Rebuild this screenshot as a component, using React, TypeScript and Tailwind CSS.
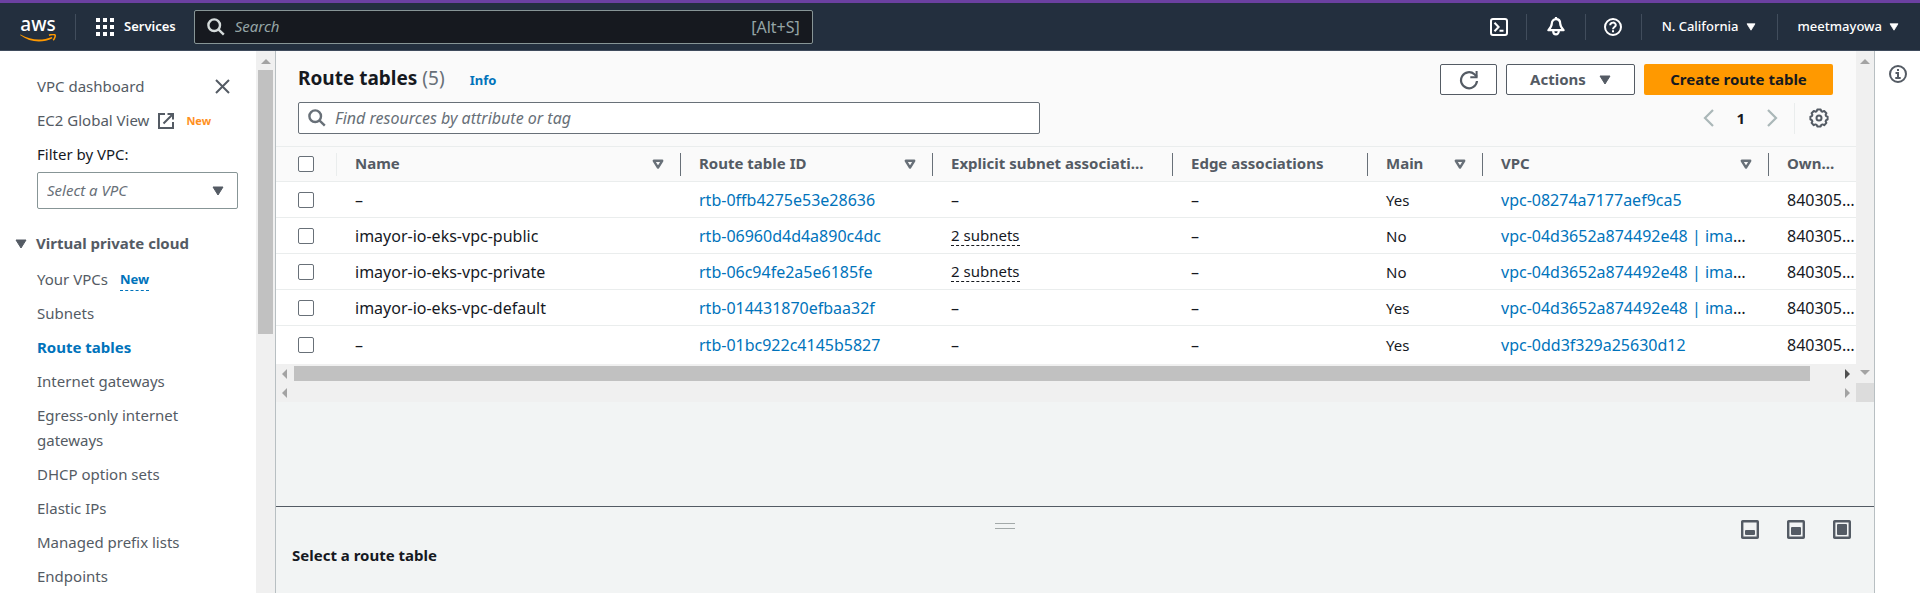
import React from "react";

type Dir = "up" | "down" | "left" | "right";

const arrowPoints: Record<Dir, string> = {
  up: "0,7 5,2 10,7",
  down: "0,3 10,3 5,8",
  left: "7,0 2,5 7,10",
  right: "3,0 8,5 3,10",
};

function ScrollArrow({ dir, color = "#a3a3a3" }: { dir: Dir; color?: string }) {
  return (
    <svg width="10" height="10" viewBox="0 0 10 10" aria-hidden="true" className="shrink-0">
      <polygon points={arrowPoints[dir]} fill={color} />
    </svg>
  );
}

function Caret({ className = "" }: { className?: string }) {
  return (
    <svg width="12" height="10" viewBox="0 0 12 10" aria-hidden="true" className={className}>
      <path d="M1 1h10L6 9z" fill="currentColor" stroke="currentColor" strokeLinejoin="round" />
    </svg>
  );
}

function SearchIcon({ className = "" }: { className?: string }) {
  return (
    <svg width="18" height="18" viewBox="0 0 18 18" fill="none" stroke="currentColor" strokeWidth="2.4" aria-hidden="true" className={className}>
      <circle cx="7.2" cy="7.2" r="5.8" />
      <path d="M11.4 11.4L16.8 16.6" />
    </svg>
  );
}

function FilterIcon() {
  return (
    <svg width="12" height="11" viewBox="0 0 12 11" fill="none" aria-hidden="true">
      <path d="M1.8 1.8h8.400L6 8.600z" stroke="#687078" strokeWidth="2.400" strokeLinejoin="round" />
    </svg>
  );
}

function AwsLogo() {
  return (
    <a href="#home" aria-label="AWS home" className="flex w-[36px] flex-col items-center pt-1 text-white">
      <span className="text-[19px] leading-[20px] font-medium">aws</span>
      <svg width="36" height="9" viewBox="0 0 36 9" fill="none" aria-hidden="true">
        <path d="M0 1C10 8.600 22.500 9.300 32.500 4.200l-.6-1.300C22 6.800 11 6.400 0.500 0.500z" fill="#ff9900" />
        <path d="M29 1.200c2.200-.9 5.400-1 6-.3.700.9-.3 3.700-1.800 5.300" stroke="#ff9900" strokeWidth="1.500" />
      </svg>
    </a>
  );
}

function TopNav() {
  return (
    <header className="flex h-12 shrink-0 items-center border-b border-[#3f4b5c] bg-[#232f3e] pr-[21px] pl-5 text-white">
      <AwsLogo />
      <div className="ml-[19px] h-[26px] w-px bg-[#414d5c]" />
      <button className="ml-5 flex items-center gap-[10px] text-[13px] font-semibold">
        <svg width="18" height="18" viewBox="0 0 18 18" fill="currentColor" aria-hidden="true">
          <path d="M0 0h4v4H0zM7 0h4v4H7zM14 0h4v4h-4zM0 7h4v4H0zM7 7h4v4H7zM14 7h4v4h-4zM0 14h4v4H0zM7 14h4v4H7zM14 14h4v4h-4z" />
        </svg>
        Services
      </button>
      <label className="ml-[18px] flex h-[34px] w-[619px] items-center rounded-[2px] border border-[#879596] bg-[#16191f] px-3 text-[#95a5a6]">
        <SearchIcon className="text-[#d5dbdb]" />
        <input
          aria-label="Search"
          placeholder="Search"
          className="ml-[10px] min-w-0 flex-1 bg-transparent text-[15px] italic outline-none placeholder:text-[#95a5a6]"
        />
        <span className="text-[16px]">[Alt+S]</span>
      </label>
      <div className="ml-auto flex items-center text-[13px] font-medium">
        <button aria-label="CloudShell">
          <svg width="18" height="18" viewBox="0 0 18 18" fill="none" stroke="currentColor" strokeWidth="2" aria-hidden="true">
            <rect x="1" y="1" width="16" height="16" rx="2" />
            <path d="M4.500 4.800L8.600 9l-4.100 4.200M9.500 12.700h4" />
          </svg>
        </button>
        <div className="mr-5 ml-[18px] h-[26px] w-px bg-[#414d5c]" />
        <button aria-label="Notifications">
          <svg width="18" height="19" viewBox="0 0 18 19" fill="none" stroke="currentColor" strokeWidth="2.200" strokeLinejoin="round" aria-hidden="true">
            <path d="M9 2.200c-2.600 0-4.200 1.900-4.200 4.300 0 2.600-.9 4-3.400 6.700h15.200c-2.500-2.700-3.400-4.100-3.400-6.700 0-2.400-1.600-4.300-4.200-4.300z" />
            <path d="M9 0v2M6.200 14c0 4.600 5.600 4.600 5.600 0" />
          </svg>
        </button>
        <div className="mr-[18px] ml-5 h-[26px] w-px bg-[#414d5c]" />
        <button aria-label="Help">
          <svg width="18" height="18" viewBox="0 0 18 18" fill="none" stroke="currentColor" strokeWidth="2" aria-hidden="true">
            <circle cx="9" cy="9" r="8" />
            <path d="M6.200 7.200C6.200 3.800 11.800 3.800 11.800 7c0 2-2.800 2-2.800 4.200M9 12.300v2" />
          </svg>
        </button>
        <div className="mr-5 ml-[19px] h-[26px] w-px bg-[#414d5c]" />
        <button className="flex items-center gap-[7px]">
          N. California
          <Caret className="h-2 w-[10px]" />
        </button>
        <div className="mr-5 ml-[21px] h-[26px] w-px bg-[#414d5c]" />
        <button className="flex items-center gap-[7px]">
          meetmayowa
          <Caret className="h-2 w-[10px]" />
        </button>
      </div>
    </header>
  );
}

const sideLinks = [
  "Subnets",
  "Route tables",
  "Internet gateways",
  "Egress-only internet gateways",
  "DHCP option sets",
  "Elastic IPs",
  "Managed prefix lists",
  "Endpoints",
];

function Sidebar() {
  return (
    <div className="flex w-[276px] shrink-0 border-r border-[#b8bfc2] bg-white">
      <nav className="min-w-0 flex-1 overflow-hidden pt-[23px] pr-[18px] pl-[37px] text-[15px] leading-[25px] text-[#545b64]">
        <div className="flex items-center justify-between pr-2">
          <a href="#dashboard">VPC dashboard</a>
          <button aria-label="Close navigation">
            <svg width="15" height="15" viewBox="0 0 15 15" fill="none" stroke="currentColor" strokeWidth="2" aria-hidden="true">
              <path d="M1 1l13 13M14 1L1 14" />
            </svg>
          </button>
        </div>
        <div className="mt-[9px] flex items-center">
          <a href="#global" className="flex items-center gap-[9px]">
            EC2 Global View
            <svg width="16" height="16" viewBox="0 0 16 16" fill="none" stroke="currentColor" strokeWidth="2" aria-hidden="true">
              <path d="M7 1H1v14h14V9" />
              <path d="M9.500 1H15v5.500M15 1L5.500 10.500" />
            </svg>
          </a>
          <span className="ml-3 text-[11px] font-bold text-[#ff9021]">New</span>
        </div>
        <label htmlFor="vpc-filter" className="mt-[9px] block text-[#16191f]">
          Filter by VPC:
        </label>
        <div className="mt-[5px] grid items-center">
          <select
            id="vpc-filter"
            className="col-start-1 row-start-1 h-[37px] appearance-none rounded-[2px] border border-[#879596] bg-white pl-[9px] text-[15px] text-[#687078] italic"
          >
            <option>Select a VPC</option>
          </select>
          <Caret className="pointer-events-none col-start-1 row-start-1 mr-[14px] justify-self-end" />
        </div>
        <button className="mt-[22px] -ml-[22px] flex items-center gap-[9px] font-bold">
          <Caret />
          Virtual private cloud
        </button>
        <div className="mt-[11px] flex gap-3">
          <a href="#vpcs">Your VPCs</a>
          <a href="#whats-new" className="h-6 border-b border-dashed border-[#0073bb] text-[13px] font-bold text-[#0073bb]">
            New
          </a>
        </div>
        <ul className="mt-[9px] flex flex-col gap-[9px]">
          {sideLinks.map((label) => (
            <li key={label}>
              <a href="#section" className={label === "Route tables" ? "font-bold text-[#0073bb]" : ""}>
                {label}
              </a>
            </li>
          ))}
        </ul>
      </nav>
      <div className="flex w-[19px] shrink-0 flex-col items-center bg-[#f0f0f0] pt-[6px]">
        <ScrollArrow dir="up" />
        <div className="mt-[3px] h-[264px] w-[15px] bg-[#c1c1c1]" />
      </div>
    </div>
  );
}

function Check({ label }: { label: string }) {
  return (
    <input
      type="checkbox"
      aria-label={label}
      className="block h-4 w-4 appearance-none rounded-[2px] border border-[#687078] bg-white"
    />
  );
}

const columns = [
  { title: "Name", filter: true },
  { title: "Route table ID", filter: true },
  { title: "Explicit subnet associati…", filter: false },
  { title: "Edge associations", filter: false },
  { title: "Main", filter: true },
  { title: "VPC", filter: true },
  { title: "Own…", filter: true },
];

const rows = [
  { name: "–", id: "rtb-0ffb4275e53e28636", subnets: "", main: "Yes", vpc: "vpc-08274a7177aef9ca5", more: false },
  { name: "imayor-io-eks-vpc-public", id: "rtb-06960d4d4a890c4dc", subnets: "2 subnets", main: "No", vpc: "vpc-04d3652a874492e48 | ima", more: true },
  { name: "imayor-io-eks-vpc-private", id: "rtb-06c94fe2a5e6185fe", subnets: "2 subnets", main: "No", vpc: "vpc-04d3652a874492e48 | ima", more: true },
  { name: "imayor-io-eks-vpc-default", id: "rtb-014431870efbaa32f", subnets: "", main: "Yes", vpc: "vpc-04d3652a874492e48 | ima", more: true },
  { name: "–", id: "rtb-01bc922c4145b5827", subnets: "", main: "Yes", vpc: "vpc-0dd3f329a25630d12", more: false },
];

function RouteTable() {
  return (
    <div className="overflow-hidden border-t border-[#eaeded]">
      <table className="w-[1612px] table-fixed border-separate border-spacing-0 text-left text-[16px] leading-5 whitespace-nowrap text-[#16191f]">
        <colgroup>
          <col className="w-[61px]" />
          <col className="w-[344px]" />
          <col className="w-[252px]" />
          <col className="w-[240px]" />
          <col className="w-[195px]" />
          <col className="w-[115px]" />
          <col className="w-[286px]" />
          <col className="w-[119px]" />
        </colgroup>
        <thead className="bg-[#fafafa] text-[15px] text-[#545b64]">
          <tr>
            <th className="h-[35px] border-b border-[#eaeded] p-0">
              <div className="flex h-[23px] items-center border-r border-[#eaeded] pl-[22px]">
                <Check label="Select all route tables" />
              </div>
            </th>
            {columns.map((c) => (
              <th key={c.title} className="border-b border-[#eaeded] p-0 font-bold">
                <div className="flex h-[23px] items-start justify-between border-r border-[#687078] pr-4 pl-[18px]">
                  {c.title}
                  {c.filter && (
                    <button aria-label={"Sort by " + c.title} className="self-center">
                      <FilterIcon />
                    </button>
                  )}
                </div>
              </th>
            ))}
          </tr>
        </thead>
        <tbody className="bg-white [&_td]:h-9 [&_td]:border-b [&_td]:border-[#eaeded] [&_td]:py-0 [&_td]:pr-0 [&_td]:pl-[18px] [&_tr:last-child_td]:h-[38px] [&_tr:last-child_td]:border-b-0">
          {rows.map((r) => (
            <tr key={r.id}>
              <td>
                <div className="pl-1">
                  <Check label={"Select " + r.id} />
                </div>
              </td>
              <td>{r.name}</td>
              <td>
                <a href="#route" className="text-[#0073bb]">
                  {r.id}
                </a>
              </td>
              <td>
                {r.subnets ? <button className="border-b border-dashed border-[#16191f] text-[15px]">{r.subnets}</button> : "–"}
              </td>
              <td>–</td>
              <td className="text-[15px]">{r.main}</td>
              <td>
                <a href="#vpc" className="text-[#0073bb]">
                  {r.vpc}
                </a>
                {r.more && "…"}
              </td>
              <td>840305…</td>
            </tr>
          ))}
        </tbody>
      </table>
    </div>
  );
}

function Toolbar() {
  return (
    <div className="bg-[#fafafa] pt-[13px] pr-[23px] pb-3 pl-[22px]">
      <div className="flex items-start gap-[9px] text-[15px] font-bold text-[#545b64]">
        <h1 className="pt-[2px] text-[19px] leading-6 text-[#16191f]">
          Route tables <span className="font-normal text-[#687078]">(5)</span>
        </h1>
        <a href="#info" className="ml-4 pt-1 text-[13px] leading-6 text-[#0073bb]">
          Info
        </a>
        <button aria-label="Refresh" className="ml-auto flex h-[31px] w-[57px] items-center justify-center rounded-[2px] border border-[#545b64] bg-white">
          <svg width="20" height="20" viewBox="0 0 20 20" fill="none" stroke="currentColor" strokeWidth="2.200" aria-hidden="true">
            <path d="M18 11A8 8 0 1 1 15.400 4.300L18 6.800" />
            <path d="M17.600 1v6.300h-6.300" strokeWidth="2" />
          </svg>
        </button>
        <button className="flex h-[31px] w-[129px] items-center justify-center gap-[13px] rounded-[2px] border border-[#545b64] bg-white">
          Actions
          <Caret />
        </button>
        <button className="h-[31px] w-[189px] rounded-[2px] bg-[#ff9900] text-[#16191f]">Create route table</button>
      </div>
      <div className="mt-[7px] flex items-center">
        <label className="flex h-8 w-[742px] items-center rounded-[2px] border border-[#687078] bg-white pl-[9px] text-[#687078]">
          <SearchIcon />
          <input
            aria-label="Find resources"
            placeholder="Find resources by attribute or tag"
            className="ml-[9px] min-w-0 flex-1 bg-transparent text-[16px] italic outline-none placeholder:text-[#687078]"
          />
        </label>
        <div className="ml-auto flex items-center text-[#aab7b8]">
          <button aria-label="Previous page">
            <svg width="11" height="18" viewBox="0 0 11 18" fill="none" stroke="currentColor" strokeWidth="2.200" aria-hidden="true">
              <path d="M10 1L2 9l8 8" />
            </svg>
          </button>
          <span className="mx-[22px] text-[15px] font-bold text-[#16191f]">1</span>
          <button aria-label="Next page">
            <svg width="11" height="18" viewBox="0 0 11 18" fill="none" stroke="currentColor" strokeWidth="2.200" aria-hidden="true">
              <path d="M1 1l8 8-8 8" />
            </svg>
          </button>
          <div className="ml-4 h-[31px] w-px bg-[#eaeded]" />
          <button aria-label="Preferences" className="mr-1 ml-[14px] text-[#545b64]">
            <svg width="20" height="20" viewBox="0 0 20 20" fill="none" stroke="currentColor" strokeWidth="2" strokeLinejoin="round" aria-hidden="true">
              <path d="M8.300 1.500h3.400l.6 1.700 1.300.5 1.600-.7 2.200 2.300-.8 1.600.5 1.200 1.500.5v2.900l-1.500.6-.5 1.200.8 1.600-2.200 2.300-1.600-.8-1.300.5-.6 1.600H8.300l-.6-1.600-1.300-.5-1.600.8-2.200-2.300.8-1.600-.5-1.200-1.500-.6V8.600l1.500-.5.5-1.200-.8-1.600L4.800 3l1.600.7 1.300-.5z" />
              <circle cx="10" cy="10" r="2.500" />
            </svg>
          </button>
        </div>
      </div>
    </div>
  );
}

function PanelIcon({ top, label }: { top: number; label: string }) {
  return (
    <button aria-label={label}>
      <svg width="18" height="19" viewBox="0 0 18 19" fill="none" aria-hidden="true">
        <rect x="1.200" y="1.200" width="15.600" height="16.600" rx="0.500" stroke="#545b64" strokeWidth="2.400" />
        <rect x="4" y={top} width="10" height={15 - top} rx="1" fill="#545b64" />
      </svg>
    </button>
  );
}

export default function App() {
  return (
    <div className="flex h-screen flex-col overflow-hidden border-t-[3px] border-[#6b40a0] bg-[#f2f3f3] font-['Noto_Sans',sans-serif]">
      <TopNav />
      <div className="flex min-h-0 flex-1">
        <Sidebar />
        <main className="flex min-w-0 flex-1 flex-col border-r border-[#b8bfc2] bg-[#f2f4f4]">
          <div className="flex">
            <div className="min-w-0 flex-1">
              <Toolbar />
              <RouteTable />
              <div className="flex h-[19px] items-center bg-[#f0f0f0] px-1">
                <ScrollArrow dir="left" />
                <div className="mr-[32px] ml-1 h-[15px] flex-1 bg-[#c1c1c1]" />
                <ScrollArrow dir="right" color="#505050" />
              </div>
            </div>
            <div className="flex w-[18px] shrink-0 flex-col items-center justify-between bg-[#f0f0f0] py-[6px]">
              <ScrollArrow dir="up" />
              <ScrollArrow dir="down" />
            </div>
          </div>
          <div className="flex h-[19px] shrink-0 bg-[#f0f0f0]">
            <div className="flex flex-1 items-center justify-between px-1">
              <ScrollArrow dir="left" />
              <ScrollArrow dir="right" />
            </div>
            <div className="w-[18px] bg-[#dcdcdc]" />
          </div>
          <section className="mt-auto h-[87px] shrink-0 border-t border-[#545b64] px-4">
            <div className="flex items-start pt-[13px]">
              <div className="flex flex-1 justify-center pt-[3px]">
                <div className="h-[6px] w-5 border-y border-[#a3a9a9]" />
              </div>
              <div className="flex gap-7 pr-[7px] pl-6">
                <PanelIcon top={10} label="Small panel" />
                <PanelIcon top={7} label="Medium panel" />
                <PanelIcon top={4} label="Full panel" />
              </div>
            </div>
            <h2 className="mt-1 text-[15px] leading-6 font-bold text-[#16191f]">Select a route table</h2>
          </section>
        </main>
        <aside className="flex w-[45px] shrink-0 justify-center bg-white pt-[14px]">
          <button aria-label="Information" className="h-[18px]">
            <svg width="18" height="18" viewBox="0 0 18 18" fill="none" stroke="#545b64" strokeWidth="2" aria-hidden="true">
              <circle cx="9" cy="9" r="8" />
              <path d="M9 4v2M6.500 8H9v5M6.300 13h5.400" />
            </svg>
          </button>
        </aside>
      </div>
    </div>
  );
}
